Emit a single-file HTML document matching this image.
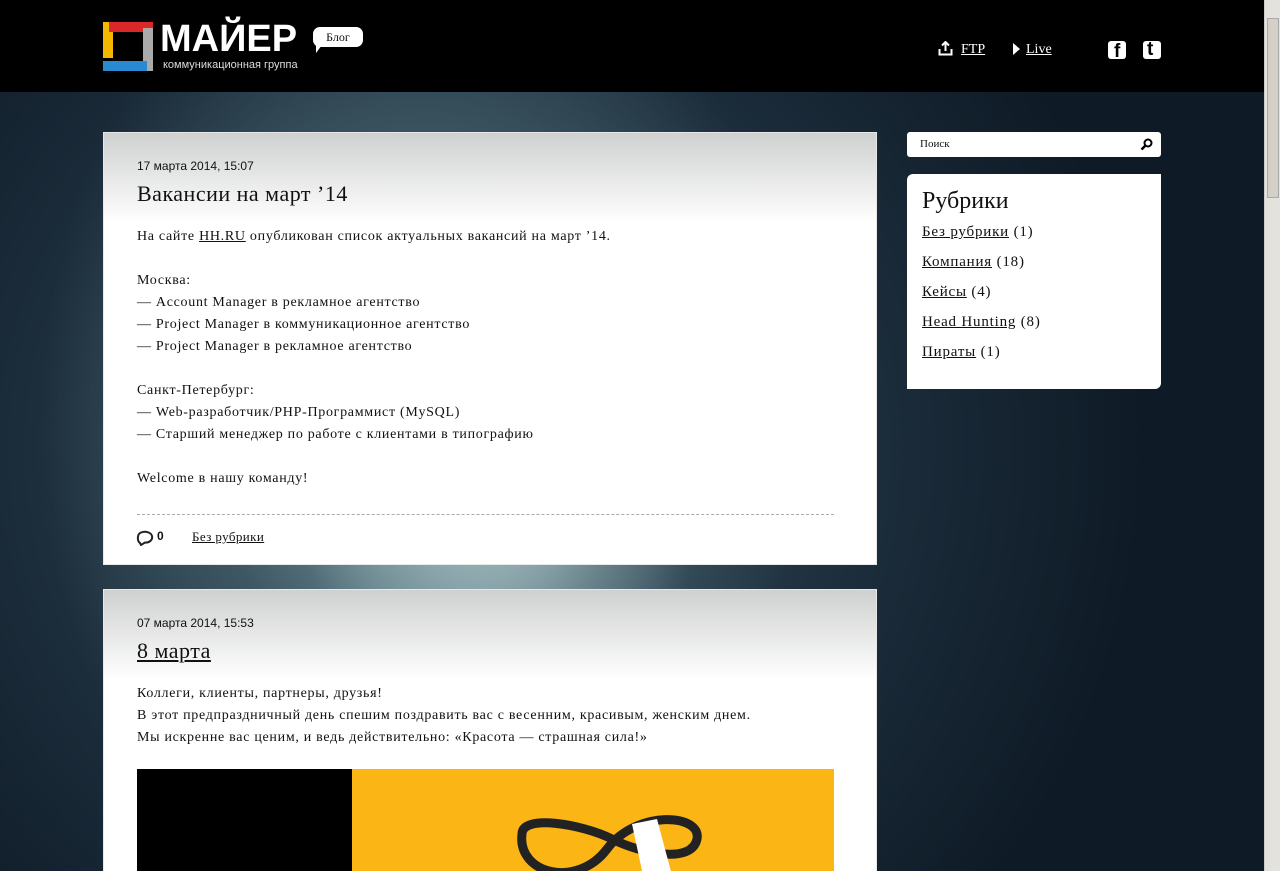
<!DOCTYPE html>
<html style="width:1280px;height:871px;overflow:hidden"><head><meta charset="utf-8"><style>
*{margin:0;padding:0;box-sizing:border-box}
body{width:1280px;height:871px;overflow:hidden;position:relative;font-family:"Liberation Serif",serif;color:#111;
background:radial-gradient(ellipse 200px 300px at 500px 480px,rgba(200,225,225,.7),transparent 100%),radial-gradient(ellipse 380px 520px at 420px 420px,rgba(150,185,190,.8),rgba(80,110,120,.5) 55%,transparent 100%),radial-gradient(ellipse 700px 700px at 450px 450px,#3e5866,#1c2d3b 60%,#0e1a26 100%);}
.hdr{position:absolute;left:0;top:0;width:1264px;height:92px;background:#000}
.sb{position:absolute;right:0;top:0;width:16px;height:871px;background:#e4e2dc;border-left:1px solid #ccc}
.sb i{position:absolute;left:2px;top:18px;width:12px;height:180px;background:#d4d0c8;border:1px solid #aaa}
.card{position:absolute;left:103px;width:774px;background:linear-gradient(#cfd0d0,#fff 90px);border:1px solid #e8e8e8;overflow:hidden}
.date{font:12px "Liberation Sans",sans-serif;position:absolute;left:33px}
.t{position:absolute;left:33px;font-size:22px;letter-spacing:.5px}
.body{position:absolute;left:33px;font-size:14px;line-height:22px;letter-spacing:.7px}
a{color:#111;text-decoration:underline}
.side{position:absolute;left:907px;width:254px}
</style></head><body>
<div class="hdr">
 <svg style="position:absolute;left:103px;top:22px" width="50" height="49"><rect x="0" y="0" width="10" height="36" fill="#f5b800"/><rect x="6" y="0" width="44" height="10" fill="#d8282a"/><rect x="40" y="6" width="10" height="43" fill="#aaa"/><rect x="0" y="39" width="44" height="10" fill="#2a8ad0"/></svg>
 <div style="position:absolute;left:160px;top:18px;color:#fff;font:bold 38px 'Liberation Sans',sans-serif;letter-spacing:0px">МАЙЕР</div>
 <div style="position:absolute;left:163px;top:59px;color:#ddd;font:11px 'Liberation Sans',sans-serif">коммуникационная группа</div>
 <div style="position:absolute;left:313px;top:27px;width:50px;height:20px;background:#fff;border-radius:7px;font:12px 'Liberation Serif',serif;text-align:center;line-height:20px">Блог</div>
 <div style="position:absolute;left:316px;top:45px;width:0;height:0;border-left:6px solid #fff;border-bottom:8px solid transparent"></div>
 <svg style="position:absolute;left:938px;top:41px" width="15" height="15"><path d="M7.5 1v9M4 4.5l3.5-3.5 3.5 3.5M1.5 8v5.5h12V8" stroke="#fff" stroke-width="2" fill="none"/></svg>
 <a href="#" style="position:absolute;left:961px;top:42px;color:#fff;font-size:14px">FTP</a>
 <div style="position:absolute;left:1013px;top:43px;border-left:7px solid #fff;border-top:6px solid transparent;border-bottom:6px solid transparent"></div>
 <a href="#" style="position:absolute;left:1026px;top:42px;color:#fff;font-size:14px">Live</a>
 <div style="position:absolute;left:1108px;top:41px;width:18px;height:18px;background:#fff;border-radius:3px;overflow:hidden"><span style="position:absolute;left:6px;top:0;color:#000;font:bold 19px 'Liberation Sans',sans-serif">f</span></div>
 <div style="position:absolute;left:1143px;top:41px;width:18px;height:18px;background:#fff;border-radius:3px;overflow:hidden"><span style="position:absolute;left:4px;top:-2px;color:#000;font:bold 19px 'Liberation Sans',sans-serif">t</span></div>
</div>
<div class="card" style="top:132px;height:433px">
 <div class="date" style="top:26px">17 марта 2014, 15:07</div>
 <div class="t" style="top:48px">Вакансии на март ’14</div>
 <div class="body" style="top:93px">На сайте <a href="#">HH.RU</a> опубликован список актуальных вакансий на март ’14.<br><br>Москва:<br>— Account Manager в рекламное агентство<br>— Project Manager в коммуникационное агентство<br>— Project Manager в рекламное агентство<br><br>Санкт-Петербург:<br>— Web-разработчик/PHP-Программист (MySQL)<br>— Старший менеджер по работе с клиентами в типографию<br><br>Welcome в нашу команду!</div>
 <div style="position:absolute;left:33px;top:381px;width:697px;border-top:1px dashed #aaa"></div>
 <svg style="position:absolute;left:32px;top:397px" width="18" height="16"><path d="M4 13C1 11 1 4 5 2.5 9 1 15 2 16 6c1 4-3 7-7 6.5L5 15z" stroke="#222" stroke-width="2" fill="none"/></svg>
 <b style="position:absolute;left:53px;top:396px;font:bold 12px 'Liberation Sans',sans-serif">0</b>
 <a href="#" style="position:absolute;left:88px;top:396px;font-size:13px;letter-spacing:.4px">Без рубрики</a>
</div>
<div class="card" style="top:589px;height:290px;border-bottom:none">
 <div class="date" style="top:26px">07 марта 2014, 15:53</div>
 <a href="#" class="t" style="top:48px">8 марта</a>
 <div class="body" style="top:93px">Коллеги, клиенты, партнеры, друзья!<br>В этот предпраздничный день спешим поздравить вас с весенним, красивым, женским днем.<br>Мы искренне вас ценим, и ведь действительно: «Красота — страшная сила!»</div>
 <div style="position:absolute;left:33px;top:179px;width:215px;height:110px;background:#000"></div>
 <div style="position:absolute;left:248px;top:179px;width:482px;height:110px;background:#fbb616">
  <svg style="position:absolute;left:160px;top:25px" width="200" height="90"><path d="M10 40c0-20 60-10 90 5s80 25 85 0-60-30-90 10-90 25-85-15z" stroke="#222" stroke-width="9" fill="none"/><path d="M120 30l15 70h30l-20-75z" fill="#fff"/></svg>
 </div>
</div>
<div class="side" style="top:132px;height:25px;background:#fff;border-radius:3px">
 <span style="position:absolute;left:13px;top:6px;font-size:11px">Поиск</span>
 <svg style="position:absolute;left:233px;top:6px" width="13" height="13"><circle cx="8" cy="5" r="3.5" stroke="#000" stroke-width="2" fill="none"/><path d="M5.5 7.5L1.5 11.5" stroke="#000" stroke-width="2.5"/></svg>
</div>
<div class="side" style="top:174px;height:215px;background:#fff;border-radius:6px 0 6px 0">
 <div style="position:absolute;left:15px;top:14px;font-size:24px">Рубрики</div>
 <div style="position:absolute;left:15px;top:43px;font-size:15px;line-height:30px;letter-spacing:.8px"><a href="#">Без рубрики</a> (1)<br><a href="#">Компания</a> (18)<br><a href="#">Кейсы</a> (4)<br><a href="#">Head Hunting</a> (8)<br><a href="#">Пираты</a> (1)</div>
</div>
<div class="sb"><i></i></div>
</body></html>
